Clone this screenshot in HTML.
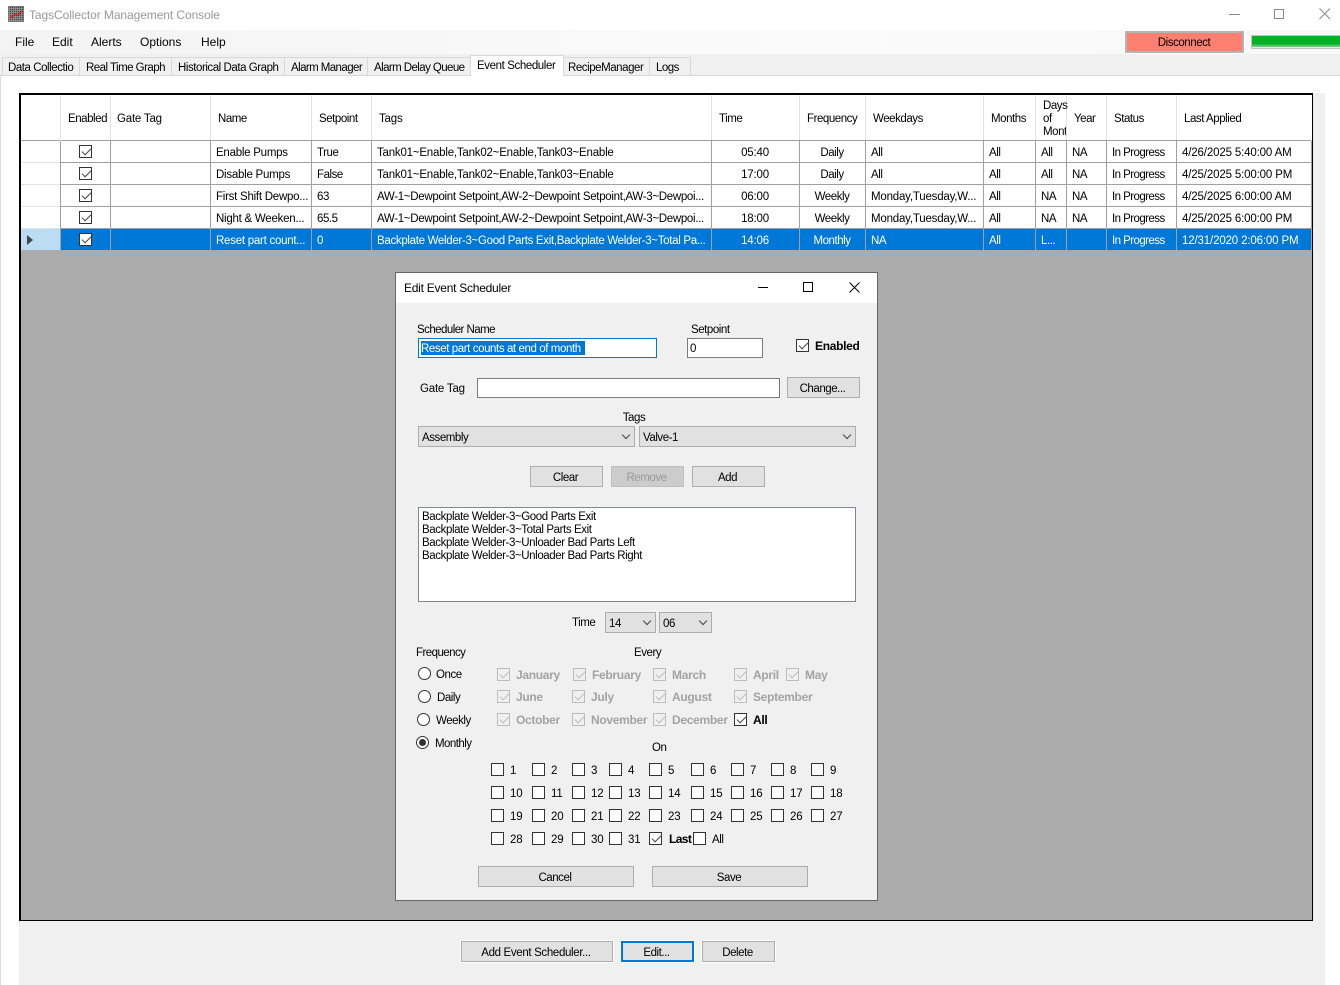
<!DOCTYPE html>
<html><head><meta charset="utf-8"><title>TagsCollector Management Console</title>
<style>
html,body{margin:0;padding:0;width:1340px;height:985px;overflow:hidden;background:#fff}
body{position:relative;font:11.5px "Liberation Sans",sans-serif;color:#000;letter-spacing:-.45px}
div,span,i{position:absolute;box-sizing:border-box}
i{font-style:normal;line-height:14px;white-space:nowrap;margin-top:1px}
.c{transform:translateX(-50%)}
.w{color:#fff}
.g{color:#a3a3a3;font-weight:bold;font-size:12px;letter-spacing:-.3px;margin-top:0}
.b{font-weight:bold;font-size:12px;letter-spacing:-.3px;margin-top:0}
.m{font-size:12px;letter-spacing:0;margin-top:0}
.t{letter-spacing:-.21px}
.a{letter-spacing:-.31px}
.d{letter-spacing:-.15px}
.p{letter-spacing:-.56px}
.n{letter-spacing:-.25px}
.y{letter-spacing:-.2px}
.q{letter-spacing:-.2px}
.hl{width:1px;top:95px;height:45px;background:#e3e3e3}
.vl{width:1px;top:141px;height:109px;background:#a0a0a0}
.rl{left:61px;width:1250px;height:1px;background:#a0a0a0}
.rh{left:21px;width:39px;height:1px;background:#e3e3e3}
.btn{background:#e1e1e1;border:1px solid #adadad;text-align:center;line-height:23px;height:21px;padding-right:2px}
.btn2{background:#e1e1e1;border:1px solid #adadad;outline:1px solid #fff;text-align:center;line-height:23px;height:21px;padding-right:2px}
.inp{background:#fff;border:1px solid #7a7a7a}
.cb{width:13px;height:13px;background:#fff;border:1px solid #333}
.cb.e{background:#f0f0f0;border-color:#bcbcbc}
.cb.k::after{content:"";position:absolute;left:2px;top:2px;width:8px;height:4px;border-left:1px solid #444;border-bottom:1px solid #444;transform:rotate(-45deg)}
.cb.e.k::after{border-color:#bcbcbc}
.r{width:13px;height:13px;border:1px solid #333;border-radius:50%;background:#fff}
.sel{background:#e1e1e1;border:1px solid #adadad;height:21px}
.sel::after{content:"";position:absolute;right:5px;top:5px;width:5px;height:5px;border-right:1px solid #444;border-bottom:1px solid #444;transform:rotate(45deg)}
</style></head><body>

<!-- chrome -->
<div style="left:8px;top:6px;width:16px;height:16px;border:1px solid #777;background-color:#444;background-image:repeating-linear-gradient(90deg,rgba(170,170,170,.6) 0 1px,transparent 1px 2px),repeating-linear-gradient(0deg,rgba(170,170,170,.6) 0 1px,transparent 1px 2px)"></div>
<svg style="position:absolute;left:8px;top:6px" width="16" height="16"><path d="M2 12L7 8.500L10 9.500L14 5" stroke="#d02020" stroke-width="1.500" fill="none"/></svg>
<i class="m" style="left:29px;top:8px;color:#999;letter-spacing:-.08px">TagsCollector Management Console</i>
<div style="left:1229px;top:14px;width:11px;height:1px;background:#888"></div>
<div style="left:1274px;top:9px;width:10px;height:10px;border:1px solid #888"></div>
<svg style="position:absolute;left:1319px;top:8px" width="12" height="12"><path d="M.5 .5L11 11M11 .5L.5 11" stroke="#888" fill="none"/></svg>

<div style="left:0;top:30px;width:1340px;height:24px;background:linear-gradient(90deg,#f3f3f3,#fbfbfb 60%,#f8f8f8)"></div>
<i class="m" style="left:15px;top:35px">File</i>
<i class="m" style="left:52px;top:35px">Edit</i>
<i class="m" style="left:91px;top:35px">Alerts</i>
<i class="m" style="left:140px;top:35px">Options</i>
<i class="m" style="left:201px;top:35px">Help</i>
<div style="left:1125px;top:31px;width:119px;height:22px;border:2px solid #b4b4b4;background:#ff8070;outline:1px solid #fff"></div>
<i class="c" style="left:1184px;top:35px">Disconnect</i>
<div style="left:1251px;top:35px;width:89px;height:14px;background:#e6e6e6;border:1px solid #c4c4c4;border-right:0"></div>
<div style="left:1252px;top:36px;width:88px;height:11px;background:linear-gradient(#06b025 70%,#7fd08f)"></div>

<!-- tabs -->
<div style="left:0;top:54px;width:1340px;height:22px;background:#f0f0f0;border-bottom:1px solid #d9d9d9"></div>
<div style="left:2px;top:57px;width:689px;height:18px;border:1px solid #d9d9d9;border-bottom:0"></div>
<div style="left:79px;top:57px;width:1px;height:18px;background:#d9d9d9"></div>
<div style="left:171px;top:57px;width:1px;height:18px;background:#d9d9d9"></div>
<div style="left:284px;top:57px;width:1px;height:18px;background:#d9d9d9"></div>
<div style="left:367px;top:57px;width:1px;height:18px;background:#d9d9d9"></div>
<div style="left:649px;top:57px;width:1px;height:18px;background:#d9d9d9"></div>
<div style="left:470px;top:55px;width:94px;height:21px;background:#fff;border:1px solid #d9d9d9;border-bottom:0"></div>
<i style="left:8px;top:60px">Data Collectio</i>
<i style="left:86px;top:60px;letter-spacing:-.53px">Real Time Graph</i>
<i style="left:178px;top:60px">Historical Data Graph</i>
<i style="left:291px;top:60px;letter-spacing:-.58px">Alarm Manager</i>
<i style="left:374px;top:60px;letter-spacing:-.58px">Alarm Delay Queue</i>
<i style="left:477px;top:58px;letter-spacing:-.4px">Event Scheduler</i>
<i style="left:568px;top:60px">RecipeManager</i>
<i style="left:656px;top:60px;letter-spacing:-.5px">Logs</i>

<!-- panel -->
<div style="left:0;top:76px;width:1px;height:909px;background:#dcdcdc"></div>
<div style="left:19px;top:93px;width:1306px;height:892px;background:#f0f0f0"></div>
<div style="left:19px;top:93px;width:1294px;height:828px;background:#ababab;border:2px solid #000;border-right-width:1px;border-bottom-width:1px"></div>
<div style="left:21px;top:95px;width:1291px;height:155px;background:#fff"></div>
<div style="left:61px;top:229px;width:1251px;height:21px;background:#0078d7"></div>
<div style="left:21px;top:229px;width:39px;height:21px;background:#bcdcf4"></div>

<div class="hl" style="left:60px"></div><div class="hl" style="left:110px"></div><div class="hl" style="left:210px"></div><div class="hl" style="left:311px"></div><div class="hl" style="left:371px"></div><div class="hl" style="left:711px"></div><div class="hl" style="left:799px"></div><div class="hl" style="left:865px"></div><div class="hl" style="left:983px"></div><div class="hl" style="left:1035px"></div><div class="hl" style="left:1066px"></div><div class="hl" style="left:1106px"></div><div class="hl" style="left:1176px"></div>
<div class="vl" style="left:60px"></div><div class="vl" style="left:110px"></div><div class="vl" style="left:210px"></div><div class="vl" style="left:311px"></div><div class="vl" style="left:371px"></div><div class="vl" style="left:711px"></div><div class="vl" style="left:799px"></div><div class="vl" style="left:865px"></div><div class="vl" style="left:983px"></div><div class="vl" style="left:1035px"></div><div class="vl" style="left:1066px"></div><div class="vl" style="left:1106px"></div><div class="vl" style="left:1176px"></div><div class="vl" style="left:1311px"></div>
<div class="rl" style="top:140px"></div><div class="rl" style="top:162px"></div><div class="rl" style="top:184px"></div><div class="rl" style="top:206px"></div><div class="rl" style="top:228px"></div>
<div class="rh" style="top:140px;background:#a0a0a0"></div><div class="rh" style="top:162px"></div><div class="rh" style="top:184px"></div><div class="rh" style="top:206px"></div><div class="rh" style="top:228px"></div>

<i style="left:68px;top:111px">Enabled</i><i class="q" style="left:117px;top:111px">Gate Tag</i><i style="left:218px;top:111px">Name</i><i style="left:319px;top:111px">Setpoint</i><i class="q" style="left:379px;top:111px">Tags</i><i style="left:719px;top:111px">Time</i><i style="left:807px;top:111px">Frequency</i><i style="left:873px;top:111px">Weekdays</i><i style="left:991px;top:111px">Months</i>
<i style="left:1043px;top:98px">Days</i><i style="left:1043px;top:111px">of</i><div style="left:1043px;top:124px;width:23px;height:15px;overflow:hidden"><i style="left:0;top:0">Month</i></div>
<i style="left:1074px;top:111px">Year</i><i style="left:1114px;top:111px">Status</i><i style="left:1184px;top:111px">Last Applied</i>

<!-- rows -->
<span class="cb k" style="left:79px;top:145px"></span>
<i class="n" style="left:216px;top:145px">Enable Pumps</i><i style="left:317px;top:145px">True</i><i class="t" style="left:377px;top:145px">Tank01~Enable,Tank02~Enable,Tank03~Enable</i><i class="c y" style="left:755px;top:145px">05:40</i><i class="c" style="left:832px;top:145px">Daily</i><i style="left:871px;top:145px">All</i><i style="left:989px;top:145px">All</i><i style="left:1041px;top:145px">All</i><i style="left:1072px;top:145px">NA</i><i class="p" style="left:1112px;top:145px">In Progress</i><i class="d" style="left:1182px;top:145px">4/26/2025 5:40:00 AM</i>

<span class="cb k" style="left:79px;top:167px"></span>
<i class="n" style="left:216px;top:167px">Disable Pumps</i><i style="left:317px;top:167px">False</i><i class="t" style="left:377px;top:167px">Tank01~Enable,Tank02~Enable,Tank03~Enable</i><i class="c y" style="left:755px;top:167px">17:00</i><i class="c" style="left:832px;top:167px">Daily</i><i style="left:871px;top:167px">All</i><i style="left:989px;top:167px">All</i><i style="left:1041px;top:167px">All</i><i style="left:1072px;top:167px">NA</i><i class="p" style="left:1112px;top:167px">In Progress</i><i class="d" style="left:1182px;top:167px">4/25/2025 5:00:00 PM</i>

<span class="cb k" style="left:79px;top:189px"></span>
<i class="n" style="left:216px;top:189px">First Shift Dewpo...</i><i style="left:317px;top:189px">63</i><i class="a" style="left:377px;top:189px">AW-1~Dewpoint Setpoint,AW-2~Dewpoint Setpoint,AW-3~Dewpoi...</i><i class="c y" style="left:755px;top:189px">06:00</i><i class="c" style="left:832px;top:189px">Weekly</i><i class="y" style="left:871px;top:189px">Monday,Tuesday,W...</i><i style="left:989px;top:189px">All</i><i style="left:1041px;top:189px">NA</i><i style="left:1072px;top:189px">NA</i><i class="p" style="left:1112px;top:189px">In Progress</i><i class="d" style="left:1182px;top:189px">4/25/2025 6:00:00 AM</i>

<span class="cb k" style="left:79px;top:211px"></span>
<i class="n" style="left:216px;top:211px">Night &amp; Weeken...</i><i style="left:317px;top:211px">65.5</i><i class="a" style="left:377px;top:211px">AW-1~Dewpoint Setpoint,AW-2~Dewpoint Setpoint,AW-3~Dewpoi...</i><i class="c y" style="left:755px;top:211px">18:00</i><i class="c" style="left:832px;top:211px">Weekly</i><i class="y" style="left:871px;top:211px">Monday,Tuesday,W...</i><i style="left:989px;top:211px">All</i><i style="left:1041px;top:211px">NA</i><i style="left:1072px;top:211px">NA</i><i class="p" style="left:1112px;top:211px">In Progress</i><i class="d" style="left:1182px;top:211px">4/25/2025 6:00:00 PM</i>

<svg style="position:absolute;left:27px;top:235px" width="7" height="10"><path d="M0 0L6 5L0 10Z" fill="#444"/></svg>
<span class="cb k" style="left:79px;top:233px"></span>
<i class="w n" style="left:216px;top:233px">Reset part count...</i><i class="w" style="left:317px;top:233px">0</i><i class="w a" style="left:377px;top:233px">Backplate Welder-3~Good Parts Exit,Backplate Welder-3~Total Pa...</i><i class="c w y" style="left:755px;top:233px">14:06</i><i class="c w" style="left:832px;top:233px">Monthly</i><i class="w" style="left:871px;top:233px">NA</i><i class="w" style="left:989px;top:233px">All</i><i class="w" style="left:1041px;top:233px">L...</i><i class="w p" style="left:1112px;top:233px">In Progress</i><i class="w d" style="left:1182px;top:233px">12/31/2020 2:06:00 PM</i>

<!-- dialog -->
<div style="left:395px;top:272px;width:483px;height:629px;background:#f0f0f0;border:1px solid #666"></div>
<div style="left:396px;top:273px;width:481px;height:30px;background:#fff"></div>
<i class="m" style="left:404px;top:281px;letter-spacing:-.25px">Edit Event Scheduler</i>
<div style="left:758px;top:287px;width:10px;height:1px;background:#000"></div>
<div style="left:803px;top:282px;width:10px;height:10px;border:1px solid #000"></div>
<svg style="position:absolute;left:849px;top:282px" width="11" height="11"><path d="M.5 .5L10.500 10.500M10.500 .5L.5 10.500" stroke="#000" fill="none"/></svg>

<i style="left:417px;top:322px;letter-spacing:-.55px">Scheduler Name</i>
<i style="left:691px;top:322px">Setpoint</i>
<div class="inp" style="left:418px;top:338px;width:239px;height:20px;border-color:#0078d7"></div>
<div style="left:421px;top:341px;width:164px;height:14px;background:#0078d7"></div>
<i class="w" style="left:421px;top:341px;letter-spacing:-.41px">Reset part counts at end of month</i>
<div class="inp" style="left:687px;top:338px;width:76px;height:20px"></div>
<i style="left:690px;top:341px">0</i>
<span class="cb k" style="left:796px;top:339px"></span>
<i class="b" style="left:815px;top:339px">Enabled</i>

<i class="q" style="left:420px;top:381px">Gate Tag</i>
<div class="inp" style="left:477px;top:378px;width:303px;height:20px"></div>
<div class="btn" style="left:787px;top:377px;width:73px">Change...</div>

<i class="c" style="left:634px;top:410px">Tags</i>
<div class="sel" style="left:418px;top:426px;width:217px"></div><i style="left:422px;top:430px">Assembly</i>
<div class="sel" style="left:639px;top:426px;width:217px"></div><i style="left:643px;top:430px">Valve-1</i>

<div class="btn" style="left:530px;top:466px;width:73px">Clear</div>
<div class="btn" style="left:611px;top:466px;width:73px;background:#ccc;color:#999;border-color:#bfbfbf">Remove</div>
<div class="btn" style="left:692px;top:466px;width:73px">Add</div>

<div class="inp" style="left:418px;top:507px;width:438px;height:95px;border-color:#828790"></div>
<i style="left:422px;top:509px;letter-spacing:-.4px">Backplate Welder-3~Good Parts Exit</i>
<i style="left:422px;top:522px;letter-spacing:-.4px">Backplate Welder-3~Total Parts Exit</i>
<i style="left:422px;top:535px;letter-spacing:-.4px">Backplate Welder-3~Unloader Bad Parts Left</i>
<i style="left:422px;top:548px;letter-spacing:-.4px">Backplate Welder-3~Unloader Bad Parts Right</i>

<i style="left:572px;top:615px">Time</i>
<div class="sel" style="left:605px;top:612px;width:51px"></div><i style="left:609px;top:616px">14</i>
<div class="sel" style="left:659px;top:612px;width:53px"></div><i style="left:663px;top:616px">06</i>

<i style="left:416px;top:645px;letter-spacing:-.55px">Frequency</i>
<i style="left:634px;top:645px">Every</i>

<span class="r" style="left:418px;top:667px"></span><i style="left:436px;top:667px">Once</i>
<span class="r" style="left:418px;top:690px"></span><i style="left:437px;top:690px">Daily</i>
<span class="r" style="left:417px;top:713px"></span><i style="left:436px;top:713px">Weekly</i>
<span class="r" style="left:416px;top:736px"></span><span style="left:419px;top:739px;width:7px;height:7px;border-radius:50%;background:#333"></span><i style="left:435px;top:736px;letter-spacing:-.55px">Monthly</i>

<span class="cb e k" style="left:497px;top:668px"></span><i class="g" style="left:516px;top:668px">January</i>
<span class="cb e k" style="left:573px;top:668px"></span><i class="g" style="left:592px;top:668px">February</i>
<span class="cb e k" style="left:653px;top:668px"></span><i class="g" style="left:672px;top:668px">March</i>
<span class="cb e k" style="left:734px;top:668px"></span><i class="g" style="left:753px;top:668px">April</i>
<span class="cb e k" style="left:786px;top:668px"></span><i class="g" style="left:805px;top:668px">May</i>

<span class="cb e k" style="left:497px;top:690px"></span><i class="g" style="left:516px;top:690px">June</i>
<span class="cb e k" style="left:572px;top:690px"></span><i class="g" style="left:591px;top:690px">July</i>
<span class="cb e k" style="left:653px;top:690px"></span><i class="g" style="left:672px;top:690px">August</i>
<span class="cb e k" style="left:734px;top:690px"></span><i class="g" style="left:753px;top:690px">September</i>

<span class="cb e k" style="left:497px;top:713px"></span><i class="g" style="left:516px;top:713px">October</i>
<span class="cb e k" style="left:572px;top:713px"></span><i class="g" style="left:591px;top:713px">November</i>
<span class="cb e k" style="left:653px;top:713px"></span><i class="g" style="left:672px;top:713px">December</i>
<span class="cb k" style="left:734px;top:713px"></span><i class="b" style="left:753px;top:713px">All</i>

<i style="left:652px;top:740px">On</i>

<!-- day grid -->
<span class="cb" style="left:491px;top:763px"></span><i style="left:510px;top:763px">1</i>
<span class="cb" style="left:532px;top:763px"></span><i style="left:551px;top:763px">2</i>
<span class="cb" style="left:572px;top:763px"></span><i style="left:591px;top:763px">3</i>
<span class="cb" style="left:609px;top:763px"></span><i style="left:628px;top:763px">4</i>
<span class="cb" style="left:649px;top:763px"></span><i style="left:668px;top:763px">5</i>
<span class="cb" style="left:691px;top:763px"></span><i style="left:710px;top:763px">6</i>
<span class="cb" style="left:731px;top:763px"></span><i style="left:750px;top:763px">7</i>
<span class="cb" style="left:771px;top:763px"></span><i style="left:790px;top:763px">8</i>
<span class="cb" style="left:811px;top:763px"></span><i style="left:830px;top:763px">9</i>

<span class="cb" style="left:491px;top:786px"></span><i class="q" style="left:510px;top:786px">10</i>
<span class="cb" style="left:532px;top:786px"></span><i class="q" style="left:551px;top:786px">11</i>
<span class="cb" style="left:572px;top:786px"></span><i class="q" style="left:591px;top:786px">12</i>
<span class="cb" style="left:609px;top:786px"></span><i class="q" style="left:628px;top:786px">13</i>
<span class="cb" style="left:649px;top:786px"></span><i class="q" style="left:668px;top:786px">14</i>
<span class="cb" style="left:691px;top:786px"></span><i class="q" style="left:710px;top:786px">15</i>
<span class="cb" style="left:731px;top:786px"></span><i class="q" style="left:750px;top:786px">16</i>
<span class="cb" style="left:771px;top:786px"></span><i class="q" style="left:790px;top:786px">17</i>
<span class="cb" style="left:811px;top:786px"></span><i class="q" style="left:830px;top:786px">18</i>

<span class="cb" style="left:491px;top:809px"></span><i class="q" style="left:510px;top:809px">19</i>
<span class="cb" style="left:532px;top:809px"></span><i class="q" style="left:551px;top:809px">20</i>
<span class="cb" style="left:572px;top:809px"></span><i class="q" style="left:591px;top:809px">21</i>
<span class="cb" style="left:609px;top:809px"></span><i class="q" style="left:628px;top:809px">22</i>
<span class="cb" style="left:649px;top:809px"></span><i class="q" style="left:668px;top:809px">23</i>
<span class="cb" style="left:691px;top:809px"></span><i class="q" style="left:710px;top:809px">24</i>
<span class="cb" style="left:731px;top:809px"></span><i class="q" style="left:750px;top:809px">25</i>
<span class="cb" style="left:771px;top:809px"></span><i class="q" style="left:790px;top:809px">26</i>
<span class="cb" style="left:811px;top:809px"></span><i class="q" style="left:830px;top:809px">27</i>

<span class="cb" style="left:491px;top:832px"></span><i class="q" style="left:510px;top:832px">28</i>
<span class="cb" style="left:532px;top:832px"></span><i class="q" style="left:551px;top:832px">29</i>
<span class="cb" style="left:572px;top:832px"></span><i class="q" style="left:591px;top:832px">30</i>
<span class="cb" style="left:609px;top:832px"></span><i class="q" style="left:628px;top:832px">31</i>
<span class="cb k" style="left:649px;top:832px"></span><i class="b" style="left:669px;top:832px;letter-spacing:-.6px">Last</i>
<span class="cb" style="left:693px;top:832px"></span><i style="left:712px;top:832px">All</i>

<div class="btn" style="left:478px;top:866px;width:156px">Cancel</div>
<div class="btn" style="left:652px;top:866px;width:156px">Save</div>

<!-- bottom buttons -->
<div class="btn2" style="left:461px;top:941px;width:152px;letter-spacing:-.34px">Add Event Scheduler...</div>
<div class="btn2" style="left:621px;top:941px;width:73px;border:2px solid #0078d7;line-height:21px">Edit...</div>
<div class="btn2" style="left:702px;top:941px;width:73px">Delete</div>

</body></html>
